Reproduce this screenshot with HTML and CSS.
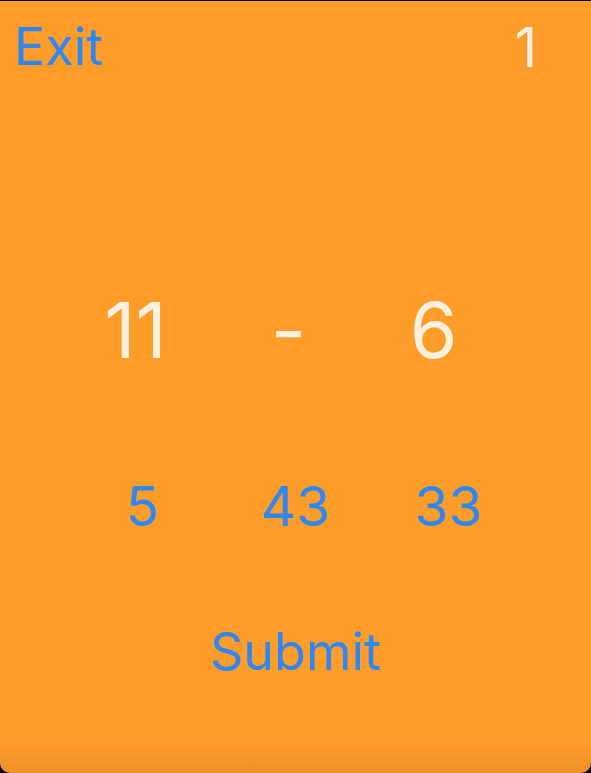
FILE: index.html
```html
<!DOCTYPE html>
<html>
<head>
<meta charset="utf-8">
<link rel="stylesheet" href="styles.css">
</head>
<body>
<div class="screen">
  <div class="top">
    <span class="exit">Exit</span>
    <span class="score">1</span>
  </div>
  <div class="problem">
    <span>11</span>
    <span>-</span>
    <span>6</span>
  </div>
  <div class="options">
    <span>5</span>
    <span>43</span>
    <span>33</span>
  </div>
  <div class="submit-row">
    <span class="submit">Submit</span>
  </div>
</div>
</body>
</html>
```
FILE: styles.css
```css
html, body {
  margin: 0;
  padding: 0;
  background: #000;
}
body {
  width: 591px;
  height: 773px;
  overflow: hidden;
  font-family: Inter, "Liberation Sans", sans-serif;
}
.screen {
  margin-top: 1px;
  height: 772px;
  box-sizing: border-box;
  background: linear-gradient(to bottom, #ff9d2b 0, #ff9d2b 740px, #f0912a 772px);
  border-radius: 0 0 10px 10px;
  display: flex;
  flex-direction: column;
}
.top {
  display: flex;
  justify-content: space-between;
  align-items: flex-start;
  padding: 14px 54px 0 14px;
  height: 70px;
  line-height: 64px;
}
.exit {
  color: #2f87f2;
  font-size: 52px;
}
.score {
  color: #fff1df;
  font-size: 55px;
}
.problem {
  display: grid;
  grid-template-columns: 157px 149px 141px;
  justify-content: start;
  justify-items: center;
  padding-left: 57px;
  margin-top: 200px;
  font-size: 77px;
  line-height: 90px;
  color: #fff1df;
}
.options {
  display: grid;
  grid-template-columns: repeat(3, 153px);
  justify-content: center;
  justify-items: center;
  margin-top: 99px;
  font-size: 55px;
  line-height: 64px;
  color: #2f87f2;
}
.submit-row {
  display: flex;
  justify-content: center;
  margin-top: 82px;
  font-size: 52px;
  line-height: 64px;
}
.submit {
  color: #2f87f2;
}
```
